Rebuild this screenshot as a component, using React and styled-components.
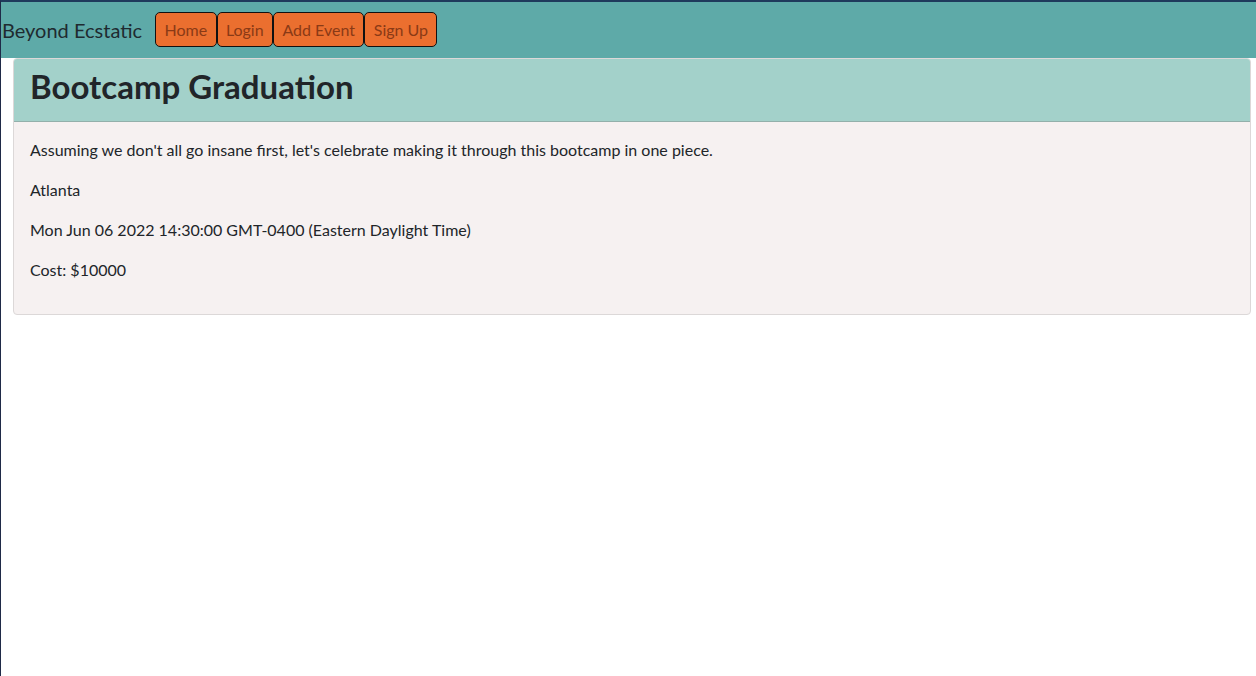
import React from 'react';
import styled, { createGlobalStyle } from 'styled-components';

const GlobalStyle = createGlobalStyle`
  html, body {
    margin: 0;
    padding: 0;
    background: #ffffff;
  }
  body {
    font-family: Lato, "Noto Sans", sans-serif;
    color: #212529;
    border-top: 2px solid #1f3a5c;
    border-left: 1px solid #1f2a48;
    min-height: 100vh;
    box-sizing: border-box;
  }
`;

const Navbar = styled.nav`
  display: flex;
  align-items: center;
  height: 56px;
  padding: 0 1px;
  background: #5eaaa8;
`;

const Brand = styled.span`
  font-size: 20px;
  margin-right: 13px;
  color: #1f2a30;
`;

const NavButton = styled.button`
  font-family: inherit;
  font-size: 16px;
  color: #8a3a16;
  background: #eb6f2f;
  border: 1px solid #111;
  border-radius: 5px;
  height: 35px;
  padding: 0 8.4px;
  margin-top: -2px;
  cursor: pointer;
`;

const Card = styled.div`
  margin: 0 5px 0 12px;
  border: 1px solid #dcd8d8;
  border-radius: 4px;
  background: #f6f1f1;
  overflow: hidden;
`;

const CardHeader = styled.div`
  background: #a3d1ca;
  padding: 8px 16px;
  border-bottom: 1px solid #93b0ab;
`;

const Title = styled.h1`
  margin: 0 0 8px;
  font-size: 33px;
  line-height: 38px;
  font-weight: 700;
  color: #212529;
`;

const CardBody = styled.div`
  padding: 16px;
`;

const Text = styled.p`
  margin: 0 0 16px;
  font-size: 16px;
  line-height: 24px;
  color: #212529;
`;

export default function App() {
  return (
    <>
      <GlobalStyle />
      <Navbar>
        <Brand>Beyond Ecstatic</Brand>
        <NavButton>Home</NavButton>
        <NavButton>Login</NavButton>
        <NavButton>Add Event</NavButton>
        <NavButton>Sign Up</NavButton>
      </Navbar>
      <Card>
        <CardHeader>
          <Title>Bootcamp Graduation</Title>
        </CardHeader>
        <CardBody>
          <Text>
            Assuming we don't all go insane first, let's celebrate making it
            through this bootcamp in one piece.
          </Text>
          <Text>Atlanta</Text>
          <Text>Mon Jun 06 2022 14:30:00 GMT-0400 (Eastern Daylight Time)</Text>
          <Text>Cost: $10000</Text>
        </CardBody>
      </Card>
    </>
  );
}
